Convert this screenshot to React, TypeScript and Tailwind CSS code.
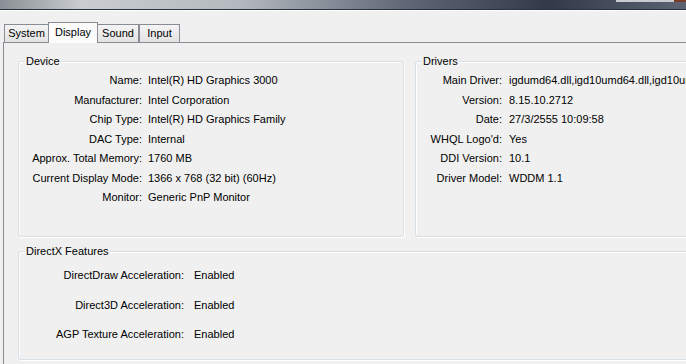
import React from "react";

const font = { fontFamily: '"Liberation Sans", Arial, sans-serif' };

function Group({
  title,
  className,
  children,
}: {
  title: string;
  className: string;
  children?: React.ReactNode;
}) {
  return (
    <div
      className={
        "relative rounded-[3px] border border-[#d5dfe5] shadow-[inset_1px_1px_0_#ffffff,1px_1px_0_#ffffff] " +
        className
      }
    >
      <span className="absolute -top-[8px] left-[6px] bg-[#f0f0f0] px-[1px] text-[11px] leading-[14px] text-black">
        {title}
      </span>
      {children}
    </div>
  );
}

function Rows({
  rows,
  labelW,
  gap,
  rowH,
}: {
  rows: [string, string][];
  labelW: string;
  gap: string;
  rowH: string;
}) {
  return (
    <div className="flex flex-col">
      {rows.map(([k, v]) => (
        <div key={k} className={"flex whitespace-nowrap text-[11px] text-black " + rowH + " " + gap}>
          <span className={"shrink-0 text-right " + labelW}>{k}</span>
          <span>{v}</span>
        </div>
      ))}
    </div>
  );
}

export default function App() {
  return (
    <div className="h-[364px] w-[686px] overflow-hidden bg-[#f0f0f0]" style={font}>
      {/* title bar remnant */}
      <div className="relative h-[10px] border-b border-[#2b3140] bg-[linear-gradient(to_right,#8a8f95_0%,#c9cdd1_12%,#b4b9bf_35%,#5d6574_60%,#323949_80%,#5c6372_100%)]">
        <div className="absolute right-0 top-0 h-[2px] w-[70px] bg-[#c8ccd2]" />
        <div className="absolute right-0 top-0 h-[2px] w-[12px] bg-[#7a3a2a]" />
      </div>
      <div className="h-px bg-[#ffffff]" />

      {/* tabs */}
      <div className="flex h-[31px] items-end pl-[4px]">
        <div className="flex h-[18px] w-[45px] items-center justify-center border border-b-0 border-[#898c95] bg-[linear-gradient(to_bottom,#f4f4f4,#e3e3e3)] text-[11px] text-black">
          System
        </div>
        <div className="relative z-10 -mb-px -ml-px flex h-[21px] w-[50px] items-center justify-center border border-b-0 border-[#898c95] bg-[#fcfcfc] pb-[2px] text-[11px] text-black">
          Display
        </div>
        <div className="-ml-px flex h-[18px] w-[42px] items-center justify-center border border-b-0 border-[#898c95] bg-[linear-gradient(to_bottom,#f4f4f4,#e3e3e3)] text-[11px] text-black">
          Sound
        </div>
        <div className="flex h-[18px] w-[41px] items-center justify-center border border-b-0 border-[#898c95] bg-[linear-gradient(to_bottom,#f4f4f4,#e3e3e3)] text-[11px] text-black">
          Input
        </div>
      </div>

      {/* tab panel */}
      <div className="ml-[3px] h-[400px] border-l border-t border-[#898c95] pl-[14px] pt-[18px]">
        <div className="flex gap-[11px]">
          <Group title="Device" className="h-[176px] w-[386px] shrink-0 pt-[9px]">
            <Rows
              labelW="w-[123px]"
              gap="gap-[6px]"
              rowH="h-[19.5px] leading-[19.5px]"
              rows={[
                ["Name:", "Intel(R) HD Graphics 3000"],
                ["Manufacturer:", "Intel Corporation"],
                ["Chip Type:", "Intel(R) HD Graphics Family"],
                ["DAC Type:", "Internal"],
                ["Approx. Total Memory:", "1760 MB"],
                ["Current Display Mode:", "1366 x 768 (32 bit) (60Hz)"],
                ["Monitor:", "Generic PnP Monitor"],
              ]}
            />
          </Group>
          <Group title="Drivers" className="h-[176px] w-[300px] shrink-0 pt-[9px]">
            <Rows
              labelW="w-[86px]"
              gap="gap-[7px]"
              rowH="h-[19.5px] leading-[19.5px]"
              rows={[
                ["Main Driver:", "igdumd64.dll,igd10umd64.dll,igd10umd64.dll"],
                ["Version:", "8.15.10.2712"],
                ["Date:", "27/3/2555 10:09:58"],
                ["WHQL Logo'd:", "Yes"],
                ["DDI Version:", "10.1"],
                ["Driver Model:", "WDDM 1.1"],
              ]}
            />
          </Group>
        </div>
        <Group title="DirectX Features" className="mt-[14px] h-[109px] w-[720px] pt-[9px]">
          <Rows
            labelW="w-[165px]"
            gap="gap-[10px]"
            rowH="h-[29.5px] leading-[29.5px]"
            rows={[
              ["DirectDraw Acceleration:", "Enabled"],
              ["Direct3D Acceleration:", "Enabled"],
              ["AGP Texture Acceleration:", "Enabled"],
            ]}
          />
        </Group>
      </div>
    </div>
  );
}
